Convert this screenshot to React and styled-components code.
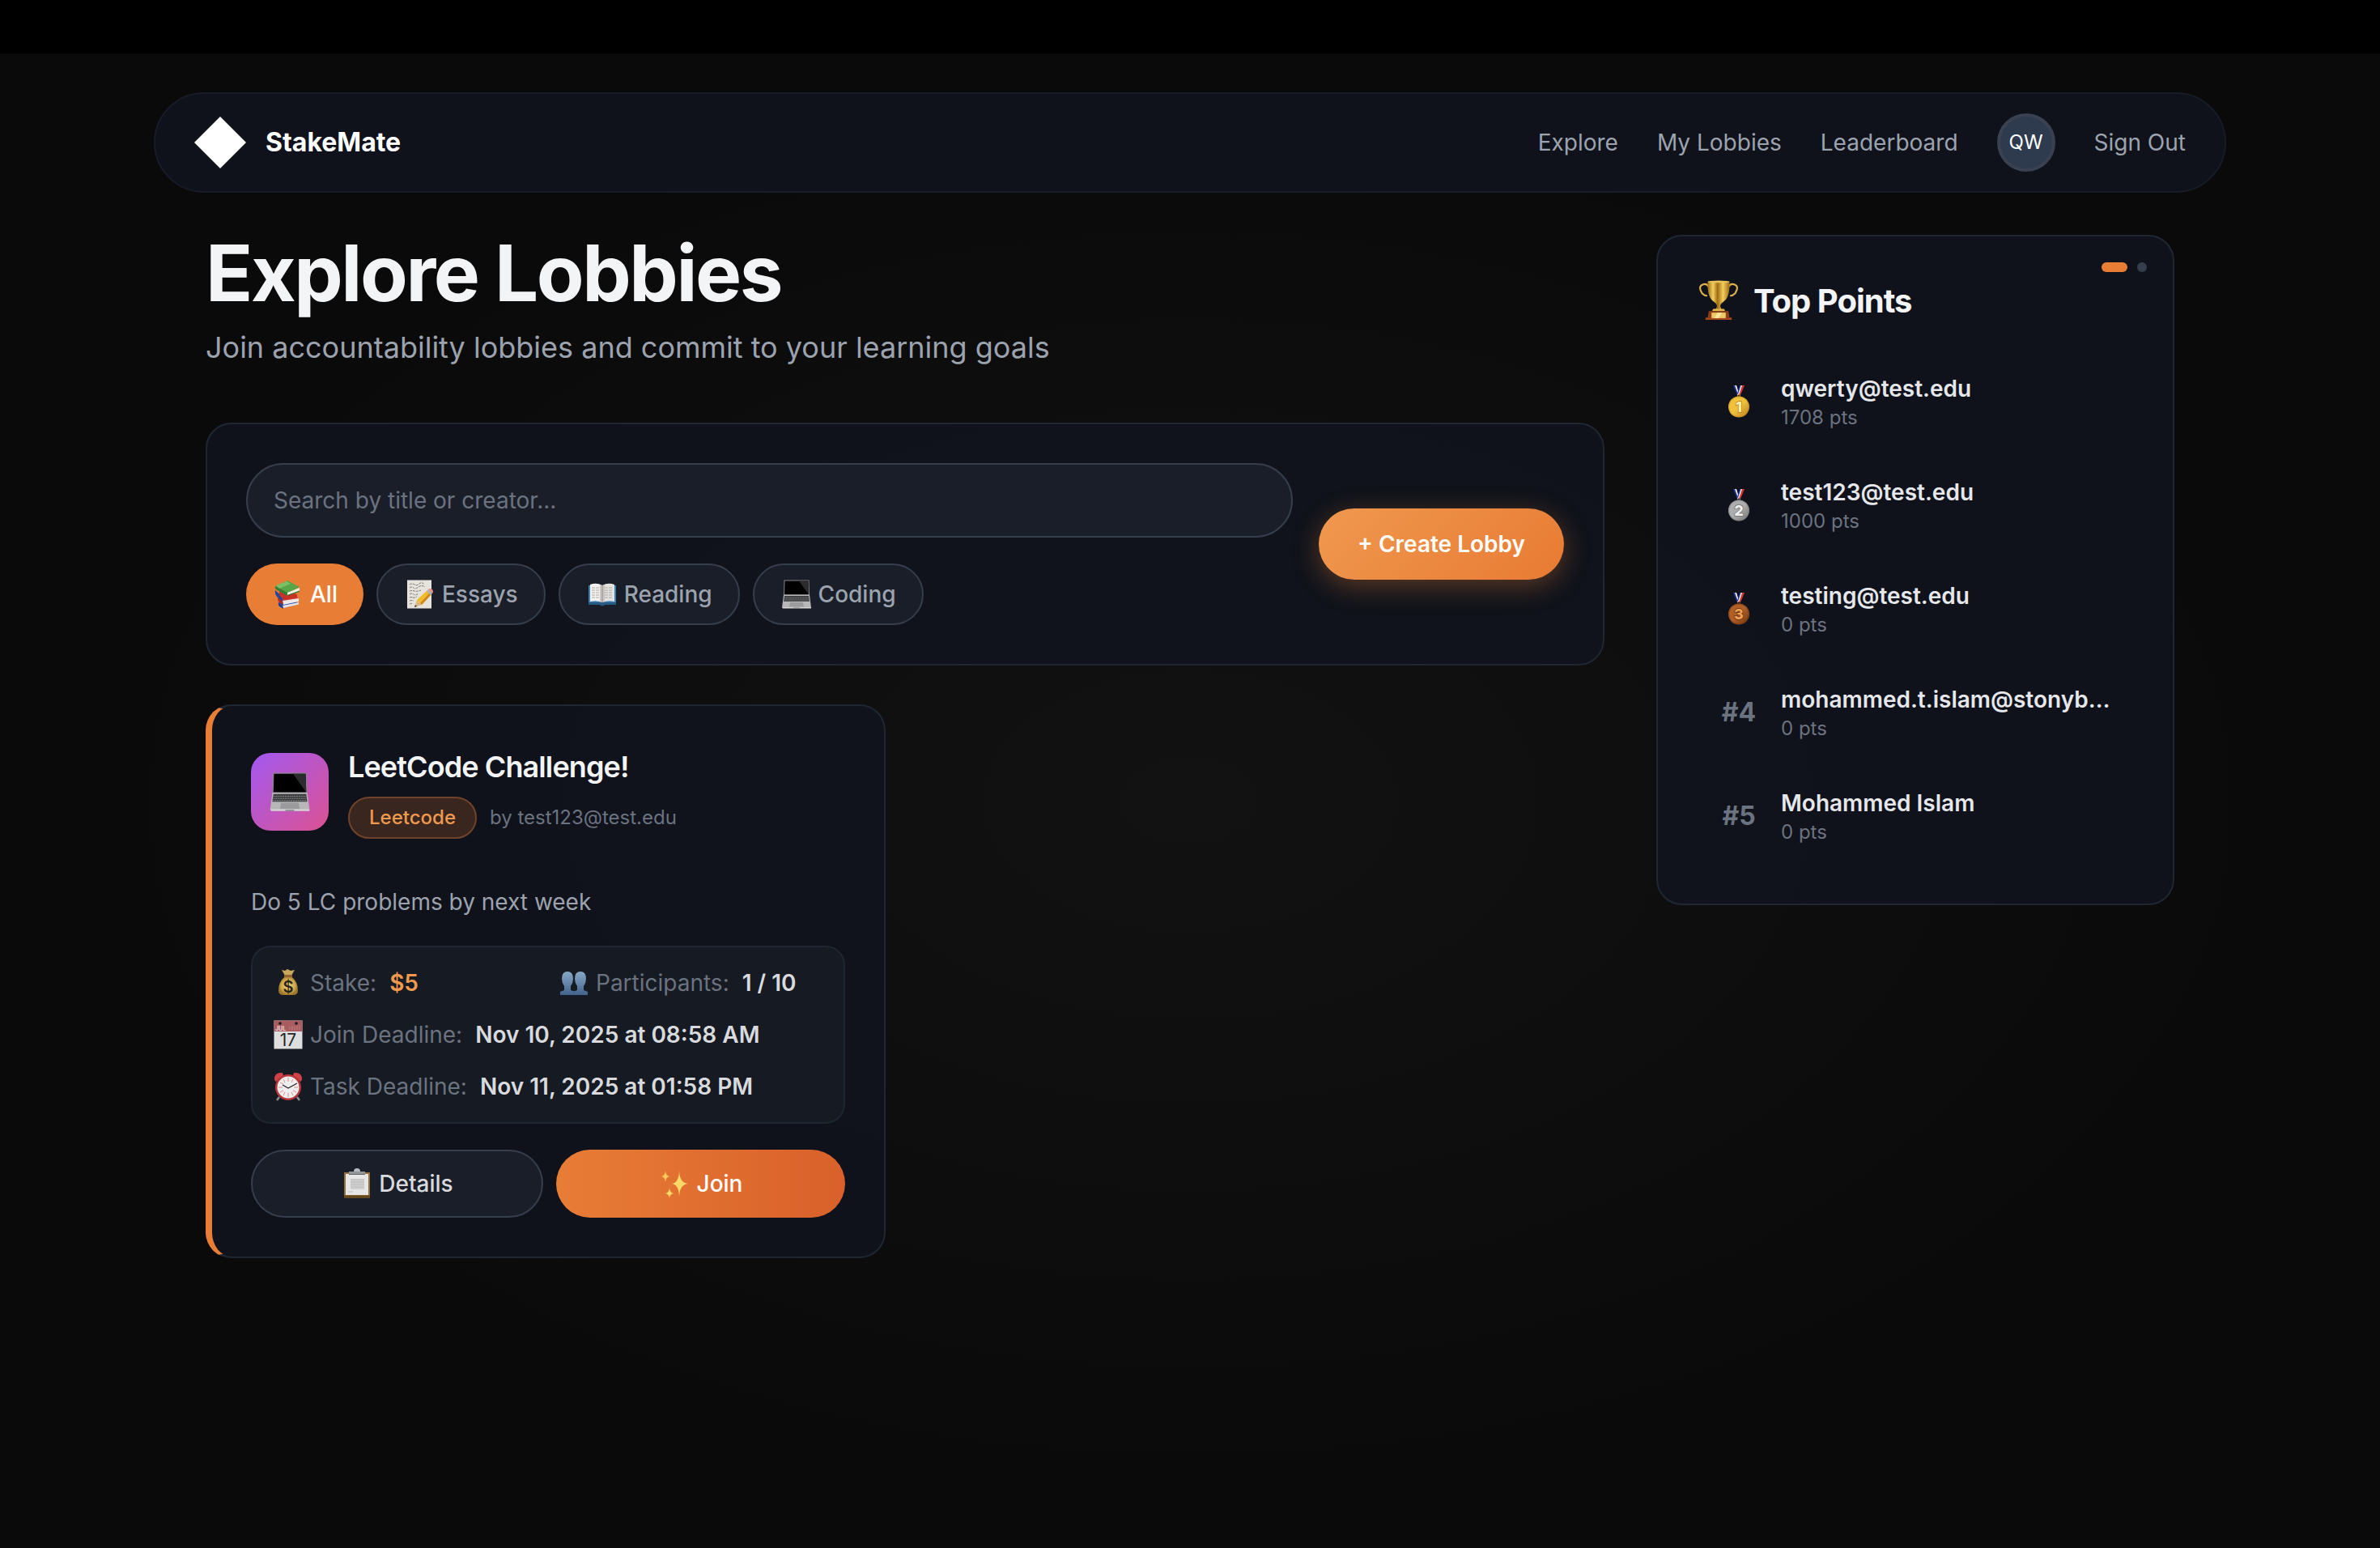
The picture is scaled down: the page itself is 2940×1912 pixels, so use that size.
import React, { useState } from "react";
import styled, { createGlobalStyle, css } from "styled-components";

const GlobalStyle = createGlobalStyle`
  * {
    box-sizing: border-box;
  }
  html {
    background: #0a0a0a;
  }
  body {
    margin: 0;
    font-family: "Inter", "Liberation Sans", sans-serif;
    font-size: 28px;
    line-height: 40px;
    color: #f3f4f6;
    -webkit-font-smoothing: antialiased;
  }
  h1, h2, h3, p, ul, ol, dl, dd {
    margin: 0;
    padding: 0;
  }
  button, input {
    font: inherit;
    color: inherit;
  }
`;

const Page = styled.div`
  display: flex;
  flex-direction: column;
  min-height: 100vh;
`;

const TopStrip = styled.div`
  height: 66px;
  background: #000;
`;

const Body = styled.div`
  flex: 1;
  padding: 48px 64px;
  background: radial-gradient(ellipse at center, #121212 0%, #0a0a0a 66%);
`;

const Nav = styled.nav`
  display: flex;
  align-items: center;
  justify-content: space-between;
  max-width: 2560px;
  margin: 0 auto;
  padding: 24px 48px;
  background: #0f121b;
  border: 2px solid #181c28;
  border-radius: 62px;
`;

const Brand = styled.a`
  display: flex;
  align-items: center;
  gap: 24px;
  color: #fff;
  font-size: 32px;
  font-weight: 700;
  text-decoration: none;
`;

const NavLinks = styled.div`
  display: flex;
  align-items: center;
  gap: 48px;
`;

const navItem = css`
  padding: 0;
  color: #9ca3af;
  text-decoration: none;
  background: none;
  border: 0;
  cursor: pointer;
`;

const NavLink = styled.a`
  ${navItem}
`;

const SignOut = styled.button`
  ${navItem}
`;

const Avatar = styled.div`
  display: flex;
  align-items: center;
  justify-content: center;
  width: 72px;
  height: 72px;
  font-size: 24px;
  color: #fff;
  background: #2e3b4e;
  border: 4px solid #3a4150;
  border-radius: 50%;
`;

const Main = styled.main`
  display: grid;
  grid-template-columns: minmax(0, 1fr) 640px;
  gap: 64px;
  align-items: start;
  max-width: 2560px;
  margin: 52px auto 0;
  padding: 0 64px;
`;

const Title = styled.h1`
  font-size: 96px;
  line-height: 94px;
  font-weight: 700;
  letter-spacing: -0.025em;
`;

const Subtitle = styled.p`
  margin: 17px 0 65px;
  font-size: 36px;
  line-height: 56px;
  color: #9ca3af;
`;

const panel = css`
  background: rgba(16, 20, 29, 0.85);
  border: 2px solid #1f2735;
  border-radius: 32px;
`;

const SearchCard = styled.section`
  ${panel}
  display: flex;
  align-items: center;
  gap: 32px;
  padding: 48px;
`;

const SearchFields = styled.div`
  flex: 1;
  display: flex;
  flex-direction: column;
  gap: 32px;
`;

const SearchInput = styled.input`
  width: 100%;
  height: 92px;
  padding: 0 32px;
  background: #1a1e28;
  border: 2px solid #363d4c;
  border-radius: 46px;
  outline: none;
  &::placeholder {
    color: #6b7280;
    opacity: 1;
  }
`;

const Filters = styled.div`
  display: flex;
  gap: 16px;
`;

const Filter = styled.button`
  display: flex;
  align-items: center;
  gap: 7px;
  height: 76px;
  padding: 0 32px;
  font-weight: 500;
  color: ${(p) => (p.$active ? "#fff" : "#9ca3af")};
  background: ${(p) => (p.$active ? "#e87d36" : "#1a1e28")};
  border: ${(p) => (p.$active ? "0" : "2px solid #363d4c")};
  border-radius: 38px;
  cursor: pointer;
`;

const CreateButton = styled.button`
  height: 88px;
  padding: 0 48px;
  font-weight: 600;
  color: #fff;
  background: linear-gradient(135deg, #f0994f, #e87a33);
  border: 0;
  border-radius: 44px;
  box-shadow: 0 8px 32px rgba(232, 125, 54, 0.35);
  cursor: pointer;
`;

const LobbyGrid = styled.div`
  display: grid;
  grid-template-columns: repeat(2, minmax(0, 1fr));
  gap: 48px;
  margin-top: 48px;
`;

const LobbyCard = styled.article`
  ${panel}
  border-left: 8px solid #e87d36;
  padding: 48px;
`;

const LobbyHead = styled.header`
  display: flex;
  align-items: center;
  gap: 24px;
`;

const LobbyIcon = styled.div`
  display: flex;
  align-items: center;
  justify-content: center;
  width: 96px;
  height: 96px;
  background: linear-gradient(135deg, #a259f0, #dc5292);
  border-radius: 24px;
`;

const LobbyTitle = styled.h3`
  font-size: 36px;
  line-height: 54px;
  font-weight: 600;
  letter-spacing: -0.025em;
`;

const LobbyMeta = styled.div`
  display: flex;
  align-items: center;
  gap: 16px;
  margin-top: 10px;
  font-size: 24px;
  line-height: 32px;
  color: #6b7280;
`;

const Tag = styled.span`
  padding: 8px 24px;
  font-weight: 500;
  color: #f0994f;
  background: #38261f;
  border: 2px solid #70432a;
  border-radius: 26px;
`;

const Description = styled.p`
  margin: 56px 0 32px;
  line-height: 44px;
  color: #9ca3af;
`;

const Info = styled.dl`
  display: grid;
  grid-template-columns: 1fr 1fr;
  gap: 24px;
  padding: 24px;
  background: #161a22;
  border: 2px solid #1f2631;
  border-radius: 24px;
`;

const InfoItem = styled.div`
  display: flex;
  align-items: center;
  gap: 16px;
  grid-column: ${(p) => (p.$wide ? "1 / -1" : "auto")};
  dt {
    display: flex;
    align-items: center;
    gap: 7px;
    color: #6b7280;
  }
  dd {
    font-weight: 600;
    color: ${(p) => (p.$accent ? "#f0994f" : "#d8dade")};
  }
`;

const Actions = styled.div`
  display: flex;
  gap: 16px;
  margin-top: 32px;
`;

const ActionButton = styled.button`
  flex: 1;
  display: flex;
  align-items: center;
  justify-content: center;
  gap: 7px;
  height: 84px;
  padding: 0 32px;
  font-weight: 500;
  color: ${(p) => (p.$primary ? "#fff" : "#d8dade")};
  background: ${(p) =>
    p.$primary ? "linear-gradient(90deg, #e87d36, #d9602a)" : "#1a1e28"};
  border: ${(p) => (p.$primary ? "0" : "2px solid #363d4c")};
  border-radius: 42px;
  cursor: pointer;
`;

const Sidebar = styled.aside`
  ${panel}
  position: relative;
  padding: 48px;
`;

const Dots = styled.div`
  position: absolute;
  top: 32px;
  right: 32px;
  display: flex;
  gap: 12px;
`;

const Dot = styled.button`
  width: ${(p) => (p.$active ? "32px" : "12px")};
  height: 12px;
  padding: 0;
  background: ${(p) => (p.$active ? "#e87d36" : "#363d4c")};
  border: 0;
  border-radius: 6px;
  cursor: pointer;
`;

const BoardTitle = styled.h2`
  display: flex;
  align-items: center;
  gap: 16px;
  margin-bottom: 32px;
  font-size: 40px;
  line-height: 64px;
  font-weight: 700;
  letter-spacing: -0.025em;
`;

const Board = styled.ol`
  display: flex;
  flex-direction: column;
  gap: 8px;
  list-style: none;
`;

const BoardRow = styled.li`
  display: flex;
  align-items: center;
  gap: 24px;
  padding: 24px;
`;

const Rank = styled.div`
  display: flex;
  flex: none;
  justify-content: center;
  width: 56px;
  font-size: 32px;
  font-weight: 700;
  color: #6b7280;
`;

const Player = styled.div`
  min-width: 0;
`;

const PlayerName = styled.div`
  font-weight: 600;
  color: #e5e7eb;
  white-space: nowrap;
`;

const Points = styled.div`
  font-size: 24px;
  line-height: 32px;
  color: #6b7280;
`;

const Glyph = styled.svg`
  display: block;
  flex: none;
`;

function Icon({ size = 40, children }) {
  return (
    <Glyph width={size} height={size} viewBox="0 0 40 40" aria-hidden="true">
      {children}
    </Glyph>
  );
}

const Books = () => (
  <Icon>
    <path d="M8 30l20-3 5 5-19 5z" fill="#2c4aa0" />
    <path d="M13 34l20-4v2.500l-19 4.500z" fill="#e4e4e8" />
    <path d="M8 30l5 4 1 4-5-3q-2-2-1-5z" fill="#23418f" />
    <path d="M8 23l19-2 6 4-19 4z" fill="#d4382c" />
    <path d="M13 28l20-3v4l-19 4z" fill="#eceaea" />
    <path d="M8 23l5 5 1 5-5-3q-3-3-1-7z" fill="#b52a22" />
    <path d="M4 15l9 8v6l-6-5q-4-4-3-9z" fill="#27479c" />
    <path d="M9 15l22 5v4l-16 3-6-6z" fill="#c83227" />
    <path d="M4 10L19 3l15 8-15 8z" fill="#58a548" />
    <path d="M5 9l13-5 5 3-14 6z" fill="#7dbf65" />
    <path d="M19 18l15-6v4l-15 5z" fill="#efefe4" />
    <path d="M4 10l15 8v4L5 14q-2-2-1-4z" fill="#357d32" />
    <path d="M19 21l15-5.500v1.500l-15 5z" fill="#34752f" />
  </Icon>
);

const Memo = () => (
  <Icon>
    <path d="M4 2.500h30v35H4z" fill="#e6e3dd" />
    <path
      d="M7 8q3-2 6 0t6-1 6 1M7 12q3-2 5 0t6-1 8 0M7 16q3-1 6 0t8-1M7 20q3-2 5 0t6-1M7 24q3-1 4 0t5-1M7 28q3-1 5 0M7 32q2-1 4 0"
      fill="none"
      stroke="#77777a"
      strokeWidth="1"
      strokeDasharray="3 1"
    />
    <path d="M13 36l3-9 6 6z" fill="#dcb680" />
    <path d="M13 36l1-3 2 2z" fill="#333" />
    <path d="M16 27l13-12 5 5-12 13z" fill="#f2bb2c" />
    <path d="M20 31l12-13 2 2-12 13z" fill="#c98a1c" />
    <path d="M28 16l2-2 5 5-2 2z" fill="#a9b2b8" />
    <path d="M30 14q2-2 5 0 2 3 0 5z" fill="#ea8a87" />
  </Icon>
);

const OpenBook = () => (
  <Icon>
    <path d="M3 9h34v24H23q-3 2-6 0H3z" fill="#3d7fae" />
    <path d="M3 30h34v3H23q-3 2-6 0H3z" fill="#265b83" />
    <path d="M5 8q8-3 15 1v21q-7-3-15-1z" fill="#f3f2f0" />
    <path d="M35 8q-8-3-15 1v21q7-3 15-1z" fill="#e4e2df" />
    <path d="M17 8l3 1 3-1v21l-3 1-3-1z" fill="#c9c6c3" />
    <path d="M20 9v21" stroke="#8f8c88" strokeWidth="1" />
    <path
      d="M7 12h10M7 15h10M7 18h10M7 21h10M7 24h10M23 12h10M23 15h10M23 18h10M23 21h10M23 24h10"
      stroke="#aaa7a4"
      strokeWidth="1"
      strokeDasharray="4 1"
    />
  </Icon>
);

const Laptop = ({ size }) => (
  <Icon size={size}>
    <path d="M4.500 2.500h31L36 21H4z" fill="#85868a" />
    <path d="M5.500 3.500h29l.5 17H5z" fill="#000" />
    <path d="M23 3.500h11.500l.5 17z" fill="#2b2c2e" />
    <path d="M4 20.500h32L38 36.500H2z" fill="#b7b7b8" />
    <path d="M5 22h30l1 7H4z" fill="#3a3b3d" />
    <path
      d="M5 24h30M5 26h30M4 28h32"
      stroke="#929395"
      strokeWidth=".7"
      strokeDasharray="1.500 .6"
    />
    <path d="M12 30h16l1 5.500H11z" fill="#9b9b9d" />
    <path d="M2 36h36v1.500H3z" fill="#d5d5d6" />
    <path d="M16 36.500h8v1h-8z" fill="#77787a" />
  </Icon>
);

const Trophy = () => (
  <Icon size={54}>
    <defs>
      <linearGradient id="cup">
        <stop offset="0" stopColor="#9c6d16" />
        <stop offset=".25" stopColor="#f3cf60" />
        <stop offset=".45" stopColor="#a06c12" />
        <stop offset=".7" stopColor="#f2cd5c" />
        <stop offset="1" stopColor="#9a6a14" />
      </linearGradient>
    </defs>
    <path
      d="M11 7Q9 3 5 5t0 8q2 2 4 2M29 7q2-4 6-2t0 8q-2 2-4 2"
      fill="none"
      stroke="#dcb04a"
      strokeWidth="1.600"
      strokeLinecap="round"
    />
    <path
      d="M10 2h20q.5 14-5 18-3 2-3.500 4 0 2 2.500 5h-8q2.500-3 2.500-5-.5-2-3.500-4Q9.500 16 10 2z"
      fill="url(#cup)"
    />
    <ellipse cx="20" cy="2.200" rx="10" ry="1" fill="#e9c35a" />
    <path d="M15 27h10l1 2H14z" fill="#e2b548" />
    <path d="M11 29h18l1 6H10z" fill="#8d3f1a" />
    <path d="M8 35h24v2H8z" fill="#a3491d" />
    <path d="M13.500 30.500h13v5h-13z" fill="#efc963" />
    <path d="M19 30.500h4l-3 5h-4z" fill="#fbe7a0" />
  </Icon>
);

const medalTones = {
  1: ["#f0c23c", "#b97c18", "#fff0a8"],
  2: ["#adadad", "#707070", "#efefef"],
  3: ["#b05f27", "#6e320e", "#eda257"],
};

const Medal = ({ place }) => {
  const [light, dark, digit] = medalTones[place];
  return (
    <Icon>
      <defs>
        <linearGradient id={`medal${place}`} x2="1" y2="1">
          <stop offset="0" stopColor={light} />
          <stop offset=".5" stopColor={light} />
          <stop offset="1" stopColor={dark} />
        </linearGradient>
      </defs>
      <path d="M13 0h4l4 12h-3z" fill="#20359b" />
      <path d="M15 0h2l3 10-1 1z" fill="#eee" />
      <path d="M27 0h-4l-4 12h3z" fill="#d8372f" />
      <path d="M24 0h-2l-4 12h2z" fill="#f3f3f3" />
      <path d="M22.500 0H21l-3 10 1 1z" fill="#20359b" />
      <circle cx="20" cy="13" r="1.500" fill="none" stroke={dark} />
      <circle cx="20" cy="26.500" r="13" fill={`url(#medal${place})`} />
      <circle cx="20" cy="26.500" r="12.400" fill="none" stroke={dark} strokeOpacity=".5" />
      <text
        x="20"
        y="33"
        fontSize="18"
        fontWeight="800"
        textAnchor="middle"
        fill={digit}
        stroke={dark}
        strokeWidth="1.500"
        paintOrder="stroke"
      >
        {place}
      </text>
    </Icon>
  );
};

const MoneyBag = () => (
  <Icon>
    <defs>
      <radialGradient id="bag">
        <stop offset="0" stopColor="#eed27c" />
        <stop offset=".7" stopColor="#d0aa4c" />
        <stop offset="1" stopColor="#9b7628" />
      </radialGradient>
    </defs>
    <path
      d="M16 12h8q8 7 8 17 0 6-6 6H14q-6 0-6-6 0-10 8-17z"
      fill="url(#bag)"
    />
    <path d="M12 4l4 1 3-2 4 2 5-1-4 7h-8z" fill="#c9a75b" />
    <path d="M15 10h10v3H15z" fill="#94632e" />
    <text x="20" y="32" fontSize="20" fontWeight="600" textAnchor="middle" fill="#29241b">
      $
    </text>
  </Icon>
);

const People = () => (
  <Icon>
    <defs>
      <linearGradient id="bust" x2="0" y2="1">
        <stop offset="0" stopColor="#88a8c6" />
        <stop offset="1" stopColor="#42648c" />
      </linearGradient>
    </defs>
    <path
      d="M12 6q7 0 7 9 0 5-3 9v5l6 2v4H3v-4l5-2v-5q-3-4-3-9 0-9 7-9z"
      fill="url(#bust)"
    />
    <path
      d="M28 6q7 0 7 9 0 5-3 9v5l5 2v4H19v-4l5-2v-5q-3-4-3-9 0-9 7-9z"
      fill="url(#bust)"
    />
  </Icon>
);

const Calendar = () => (
  <Icon>
    <path d="M2.500 2.500h35v35h-35z" fill="#dedede" />
    <path d="M2.500 2.500h35V16h-35z" fill="#a85c5f" />
    <circle cx="10" cy="6" r="1.800" fill="#1d1b20" />
    <circle cx="30" cy="6" r="1.800" fill="#1d1b20" />
    <text x="4" y="14.500" fontSize="7" fontWeight="700" fill="#ead3d3">
      JUL
    </text>
    <path d="M22 10v4M25 9v5M28 10v4M31 9v5M34 8v6" stroke="#bd8083" />
    <text x="20" y="33.500" fontSize="21" textAnchor="middle" fill="#26262a">
      17
    </text>
  </Icon>
);

const AlarmClock = () => (
  <Icon>
    <path d="M9 33l-3 4M31 33l3 4" stroke="#8a8c90" strokeWidth="2.500" />
    <path d="M3 11q0-9 10-8l1 3-9 8q-2-1-2-3z" fill="#cf4146" />
    <path d="M37 11q0-9-10-8l-1 3 9 8q2-1 2-3z" fill="#cf4146" />
    <circle cx="20" cy="21" r="16" fill="#b8353a" />
    <circle cx="20" cy="21" r="13.500" fill="#efeeee" />
    <path
      d="M20 9v5M20 28v5M8 21h5M27 21h5M14 11l2 4M26 11l-2 4M10 15l4 2M10 27l4-2M14 31l2-4M26 31l-2-4M30 27l-4-2"
      stroke="#dc8f8f"
      strokeWidth="1"
    />
    <path d="M13 18l7 4 11-6" fill="none" stroke="#2b2b2e" strokeWidth="1.400" />
  </Icon>
);

const Clipboard = () => (
  <Icon>
    <path d="M4 6h32v31.500H4z" fill="#94713c" />
    <path d="M4 34.500h32v3H4z" fill="#654819" />
    <path d="M6 8h28v26H6z" fill="#e6e6e6" />
    <path d="M12 14h17v13H12z" fill="#cfcfcf" />
    <path
      d="M12 15h17M12 18h17M12 21h17M12 24h17M9 30h6"
      stroke="#bcbcbc"
      strokeWidth="1"
    />
    <path d="M10 5h20v4H10z" fill="#92979c" />
    <path d="M16 5q0-4 4-4t4 4z" fill="#b4babf" />
    <path d="M10 8h20v1H10z" fill="#5f6468" />
  </Icon>
);

const Sparkles = () => (
  <Icon>
    <path
      d="M25 4q.5 15 11 16-10.500 1-11 16-.5-15-9-16 8.500-1 9-16z"
      fill="#fbd968"
    />
    <path d="M8 4q.5 6 5 7-4.500 1-5 7-.5-6-5-7 4.500-1 5-7z" fill="#f8c95c" />
    <path d="M13 25q.5 6 5 7-4.500 1-5 6-.5-5-5-6 4.500-1 5-7z" fill="#fbd968" />
  </Icon>
);

const filters = [
  { name: "All", icon: <Books /> },
  { name: "Essays", icon: <Memo /> },
  { name: "Reading", icon: <OpenBook /> },
  { name: "Coding", icon: <Laptop /> },
];

const players = [
  { name: "qwerty@test.edu", points: 1708 },
  { name: "test123@test.edu", points: 1000 },
  { name: "testing@test.edu", points: 0 },
  { name: "mohammed.t.islam@stonyb…", points: 0 },
  { name: "Mohammed Islam", points: 0 },
];

function App() {
  const [search, setSearch] = useState("");
  const [category, setCategory] = useState("All");

  return (
    <Page>
      <GlobalStyle />
      <TopStrip />
      <Body>
        <Nav>
          <Brand href="#">
            <Glyph width="64" height="64" viewBox="0 0 64 64" aria-hidden="true">
              <path d="M32 0l32 32-32 32L0 32z" fill="#fff" />
            </Glyph>
            StakeMate
          </Brand>
          <NavLinks>
            <NavLink href="#explore">Explore</NavLink>
            <NavLink href="#lobbies">My Lobbies</NavLink>
            <NavLink href="#leaderboard">Leaderboard</NavLink>
            <Avatar>QW</Avatar>
            <SignOut type="button">Sign Out</SignOut>
          </NavLinks>
        </Nav>

        <Main>
          <div>
            <Title>Explore Lobbies</Title>
            <Subtitle>
              Join accountability lobbies and commit to your learning goals
            </Subtitle>

            <SearchCard>
              <SearchFields>
                <SearchInput
                  type="text"
                  aria-label="Search lobbies"
                  placeholder="Search by title or creator..."
                  value={search}
                  onChange={(e) => setSearch(e.target.value)}
                />
                <Filters>
                  {filters.map((item) => (
                    <Filter
                      key={item.name}
                      type="button"
                      $active={category === item.name}
                      onClick={() => setCategory(item.name)}
                    >
                      {item.icon}
                      {item.name}
                    </Filter>
                  ))}
                </Filters>
              </SearchFields>
              <CreateButton type="button">+ Create Lobby</CreateButton>
            </SearchCard>

            <LobbyGrid>
              <LobbyCard>
                <LobbyHead>
                  <LobbyIcon>
                    <Laptop size={54} />
                  </LobbyIcon>
                  <div>
                    <LobbyTitle>LeetCode Challenge!</LobbyTitle>
                    <LobbyMeta>
                      <Tag>Leetcode</Tag>
                      <span>by test123@test.edu</span>
                    </LobbyMeta>
                  </div>
                </LobbyHead>
                <Description>Do 5 LC problems by next week</Description>
                <Info>
                  <InfoItem $accent>
                    <dt>
                      <MoneyBag />
                      Stake:
                    </dt>
                    <dd>$5</dd>
                  </InfoItem>
                  <InfoItem>
                    <dt>
                      <People />
                      Participants:
                    </dt>
                    <dd>1 / 10</dd>
                  </InfoItem>
                  <InfoItem $wide>
                    <dt>
                      <Calendar />
                      Join Deadline:
                    </dt>
                    <dd>Nov 10, 2025 at 08:58 AM</dd>
                  </InfoItem>
                  <InfoItem $wide>
                    <dt>
                      <AlarmClock />
                      Task Deadline:
                    </dt>
                    <dd>Nov 11, 2025 at 01:58 PM</dd>
                  </InfoItem>
                </Info>
                <Actions>
                  <ActionButton type="button">
                    <Clipboard />
                    Details
                  </ActionButton>
                  <ActionButton type="button" $primary>
                    <Sparkles />
                    Join
                  </ActionButton>
                </Actions>
              </LobbyCard>
            </LobbyGrid>
          </div>

          <Sidebar>
            <Dots>
              <Dot type="button" aria-label="Top Points" $active />
              <Dot type="button" aria-label="Next board" />
            </Dots>
            <BoardTitle>
              <Trophy />
              Top Points
            </BoardTitle>
            <Board>
              {players.map((player, i) => (
                <BoardRow key={player.name}>
                  <Rank>{i < 3 ? <Medal place={i + 1} /> : `#${i + 1}`}</Rank>
                  <Player>
                    <PlayerName>{player.name}</PlayerName>
                    <Points>{player.points} pts</Points>
                  </Player>
                </BoardRow>
              ))}
            </Board>
          </Sidebar>
        </Main>
      </Body>
    </Page>
  );
}

export default App;
